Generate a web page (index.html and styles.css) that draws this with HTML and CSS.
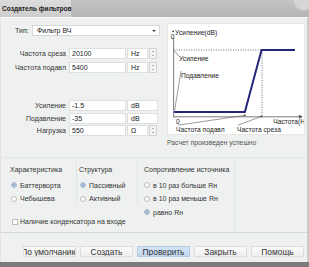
FILE: index.html
```html
<!DOCTYPE html>
<html lang="ru">
<head>
  <meta charset="UTF-8">
  <meta name="viewport" content="width=device-width, initial-scale=1.0">
  <title>Создатель фильтров</title>
  <link rel="stylesheet" href="styles.css">
</head>
<body>
  <div class="window">
    <div class="titlebar">
      <div class="tab">Создатель фильтров</div>
      <div class="close"></div>
    </div>

    <div class="content">
      <div class="top">
        <div class="form">
          <div class="type-row">
            <span class="type-label">Тип:</span>
            <div class="select">Фильтр ВЧ<span class="caret"></span></div>
          </div>

          <div class="fields freq">
            <div class="field">
              <label>Частота среза</label>
              <div class="input">20100</div>
              <div class="unit">Hz</div>
              <div class="spin"><span></span><span></span></div>
            </div>
            <div class="field">
              <label>Частота подавл</label>
              <div class="input">5400</div>
              <div class="unit">Hz</div>
              <div class="spin"><span></span><span></span></div>
            </div>
          </div>

          <div class="fields level">
            <div class="field">
              <label>Усиление</label>
              <div class="input">-1.5</div>
              <div class="unit wide">dB</div>
            </div>
            <div class="field">
              <label>Подавление</label>
              <div class="input">-35</div>
              <div class="unit wide">dB</div>
            </div>
            <div class="field">
              <label>Нагрузка</label>
              <div class="input">550</div>
              <div class="unit">Ω</div>
              <div class="spin"><span></span><span></span></div>
            </div>
          </div>
        </div>

        <div class="chart-col">
          <svg class="chart" width="138" height="112" viewBox="0 0 138 112">
            <!-- axes -->
            <line x1="5.5" y1="14" x2="5.5" y2="95" stroke="#777" stroke-width="1"/>
            <line x1="5" y1="94.5" x2="136" y2="94.5" stroke="#777" stroke-width="1"/>
            <path d="M133 92.5 L137 94.5 L133 96.5 Z" fill="#555"/>
            <circle cx="5" cy="7.5" r="0.9" fill="#333"/>
            <!-- guides -->
            <line x1="6" y1="26.5" x2="96" y2="26.5" stroke="#666" stroke-width="1" stroke-dasharray="1 1.5"/>
            <line x1="95.5" y1="27" x2="95.5" y2="94" stroke="#666" stroke-width="1" stroke-dasharray="1 1.5"/>
            <!-- response -->
            <polyline points="6,89.5 78,89.5 95,26.5 129,26.5" fill="none" stroke="#23237a" stroke-width="2"/>
            <!-- callouts -->
            <line x1="6" y1="27" x2="11" y2="33" stroke="#555" stroke-width="0.6"/>
            <line x1="13" y1="48" x2="6.5" y2="88" stroke="#555" stroke-width="0.6"/>
            <line x1="10" y1="103" x2="78" y2="93" stroke="#555" stroke-width="0.6"/>
            <line x1="71" y1="103" x2="95" y2="94" stroke="#555" stroke-width="0.6"/>
            <circle cx="78" cy="93" r="0.9" fill="#333"/>
            <circle cx="95" cy="94" r="0.9" fill="#333"/>
            <!-- labels -->
            <text x="7" y="11" class="ct">Усиление(dB)</text>
            <text x="2.5" y="15" class="ct">0</text>
            <text x="11" y="38" class="ct">Усиление</text>
            <text x="13" y="55" class="ct">Подавление</text>
            <text x="8" y="102" class="ct">0</text>
            <text x="107" y="102" class="ct">Частота(Hz)</text>
            <text x="8" y="109.5" class="ct">Частота подавл</text>
            <text x="70" y="109.5" class="ct">Частота среза</text>
          </svg>
          <div class="status">Расчет произведен успешно</div>
        </div>
      </div>

      <div class="groups">
        <div class="groups-left">
          <div class="groups-row">
            <div class="group g-char">
              <div class="group-title">Характеристика</div>
              <div class="options">
                <div class="option"><span class="radio on"></span>Баттерворта</div>
                <div class="option"><span class="radio"></span>Чебышева</div>
              </div>
            </div>
            <div class="group g-struct">
              <div class="group-title">Структура</div>
              <div class="options">
                <div class="option"><span class="radio on"></span>Пассивный</div>
                <div class="option"><span class="radio"></span>Активный</div>
              </div>
            </div>
          </div>
          <div class="check-row"><span class="checkbox"></span>Наличие конденсатора на входе</div>
        </div>
        <div class="group g-source">
          <div class="group-title">Сопротивление источника</div>
          <div class="options">
            <div class="option"><span class="radio"></span>в 10 раз больше Rн</div>
            <div class="option"><span class="radio"></span>в 10 раз меньше Rн</div>
            <div class="option"><span class="radio on"></span>равно Rн</div>
          </div>
        </div>
      </div>

      <div class="buttons">
        <button class="btn"><span>По умолчанию</span></button>
        <button class="btn">Создать</button>
        <button class="btn primary">Проверить</button>
        <button class="btn">Закрыть</button>
        <button class="btn">Помощь</button>
      </div>
    </div>

    <div class="bottom"></div>
  </div>
</body>
</html>
```

FILE: styles.css
```css
* {
  box-sizing: border-box;
  font-family: "Liberation Sans", Arial, sans-serif;
}

body {
  margin: 0;
  background: #7b7b7b;
}

.window {
  width: 309px;
  height: 267px;
  display: flex;
  flex-direction: column;
  overflow: hidden;
  background: #eff1f1;
}

.titlebar {
  height: 17px;
  display: flex;
  justify-content: space-between;
  background: linear-gradient(#c4c4c4, #b4b4b4);
  overflow: hidden;
}

.titlebar .tab {
  width: 72px;
  padding: 5px 0 0 2px;
  font-size: 6.6px;
  font-weight: bold;
  color: #222;
  white-space: nowrap;
  background: linear-gradient(#dcdcdc, #cdcdcd);
  border-right: 1px solid #bdbdbd;
}

.titlebar .close {
  width: 22px;
  height: 22px;
  margin: -11px -6px 0 0;
  border-radius: 50%;
  background: #d6d6d6;
  border: 1px solid #c6c6c6;
}

.content {
  flex: 1;
  display: flex;
  flex-direction: column;
  font-size: 7px;
  color: #333;
  border-left: 1px solid #e2e4e4;
  border-right: 2px solid #c9cccc;
  border-top: 1px solid #f8f8f8;
}

.top {
  height: 140px;
  display: flex;
  gap: 7px;
  border-bottom: 1px solid #e4e7e7;
}

/* left form */

.form {
  width: 159px;
  padding-top: 7px;
}

.type-row {
  display: flex;
  align-items: center;
  height: 11px;
  padding-left: 14px;
}

.type-label {
  width: 17px;
}

.select {
  flex: 1;
  height: 11px;
  display: flex;
  align-items: center;
  justify-content: space-between;
  padding: 0 3px 0 4px;
  background: #fff;
  border: 1px solid #d4d8d8;
  color: #222;
}

.caret {
  width: 0;
  height: 0;
  border-left: 2px solid transparent;
  border-right: 2px solid transparent;
  border-top: 2.5px solid #444;
}

.fields {
  display: flex;
  flex-direction: column;
}

.fields.freq {
  margin-top: 12px;
  gap: 3px;
}

.fields.level {
  margin-top: 27px;
  gap: 1.5px;
}

.field {
  display: flex;
  align-items: center;
  height: 11px;
  padding-left: 11px;
}

.field label {
  width: 54px;
  margin-right: 3px;
  text-align: right;
  white-space: nowrap;
}

.field .input,
.field .unit {
  height: 11px;
  display: flex;
  align-items: center;
  background: #fff;
  border: 1px solid #dde0e0;
  color: #222;
}

.field .input {
  width: 57px;
  padding-left: 2px;
}

.field .unit {
  width: 21px;
  margin-left: 1px;
  padding-left: 3px;
}

.field .unit.wide {
  width: 31px;
}

.spin {
  width: 8px;
  height: 11px;
  margin-left: 1px;
  display: flex;
  flex-direction: column;
  justify-content: space-around;
  align-items: center;
  background: #f4f4f4;
  border: 1px solid #d0d4d4;
}

.spin span {
  width: 0;
  height: 0;
  border-left: 1.5px solid transparent;
  border-right: 1.5px solid transparent;
  border-bottom: 1.5px solid #666;
}

.spin span + span {
  border-bottom: 0;
  border-top: 1.5px solid #666;
}

/* chart */

.chart-col {
  padding-top: 5px;
}

.chart {
  display: block;
  background: #fff;
  border: 1px solid #e6e8e8;
}

.ct {
  font-family: "Liberation Sans", Arial, sans-serif;
  font-size: 6.8px;
  fill: #222;
}

.status {
  margin-top: 3px;
  line-height: 10px;
  color: #555;
  font-size: 6.8px;
}

/* option groups */

.groups {
  display: flex;
  height: 75px;
  padding-left: 9px;
  border-bottom: 1px solid #d2d6d6;
}

.groups-left {
  display: flex;
  flex-direction: column;
}

.groups-row {
  display: flex;
}

.group {
  padding-top: 7px;
  border-right: 1px solid #e2e5e5;
}

.g-char {
  width: 67px;
}

.g-struct {
  width: 61px;
  padding-left: 2px;
}

.g-source {
  width: 97px;
  padding-left: 6px;
}

.group-title {
  line-height: 10px;
  white-space: nowrap;
}

.options {
  margin-top: 5px;
  display: flex;
  flex-direction: column;
  gap: 3.5px;
}

.option {
  display: flex;
  align-items: center;
  height: 10px;
  white-space: nowrap;
}

.radio {
  width: 6px;
  height: 6px;
  margin: 0 3px 0 1px;
  border-radius: 50%;
  background: #fff;
  border: 1px solid #b8bcbc;
}

.g-source .radio {
  margin-left: 0;
}

.radio.on {
  background: radial-gradient(circle, #9fb9d6 0 1.6px, #fff 1.8px);
  border-color: #a9b7c6;
}

.check-row {
  display: flex;
  align-items: center;
  height: 10px;
  margin-top: 13px;
  padding-left: 2px;
  white-space: nowrap;
}

.checkbox {
  width: 6px;
  height: 6px;
  margin-right: 2px;
  background: #fff;
  border: 1px solid #b8bcbc;
}

/* buttons */

.buttons {
  display: flex;
  gap: 4px;
  padding: 13px 0 0 22px;
}

.btn {
  width: 53px;
  height: 11px;
  padding: 0;
  display: flex;
  align-items: center;
  justify-content: center;
  overflow: hidden;
  white-space: nowrap;
  font-size: 8.4px;
  color: #333;
  background: linear-gradient(#fcfcfc, #eeeeee);
  border: 1px solid #dcdede;
  cursor: pointer;
}

.btn span {
  flex-shrink: 0;
}

.btn.primary {
  background: linear-gradient(#d4e5f6, #c2d7ee);
  border-color: #b6cbe2;
}

.bottom {
  height: 5px;
  background: #7b7b7b;
}
```
